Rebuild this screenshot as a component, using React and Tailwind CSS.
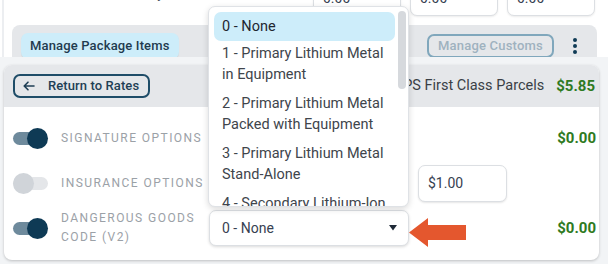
import React from "react";

function Toggle({ on }) {
  return (
    <div className="relative w-[36px] h-[21px] shrink-0">
      <div
        className={
          on
            ? "absolute left-0 top-[4px] w-[33px] h-[13px] rounded-full bg-[#6e8a9c]"
            : "absolute left-0 top-[4px] w-[35px] h-[13px] rounded-full bg-[#e4e6e9]"
        }
      />
      <div
        className={
          on
            ? "absolute top-0 left-[14px] w-[21px] h-[21px] rounded-full bg-[#0e3a55]"
            : "absolute top-0 left-0 w-[21px] h-[21px] rounded-full bg-[#d0d4d9]"
        }
      />
    </div>
  );
}

function Label({ children }) {
  return (
    <div className="w-[148px] shrink-0 text-[12px] leading-[19px] tracking-[0.12em] uppercase text-[#9ba1a7]">
      {children}
    </div>
  );
}

function Price({ children }) {
  return (
    <div className="flex-1 text-right pr-[3px] text-[15px] font-bold text-[#2e7a22]">{children}</div>
  );
}

const items = [
  ["1 - Primary Lithium Metal", "in Equipment"],
  ["2 - Primary Lithium Metal", "Packed with Equipment"],
  ["3 - Primary Lithium Metal", "Stand-Alone"],
  ["4 - Secondary Lithium-Ion", "Battery"],
];

export default function App() {
  return (
    <div className="relative w-[608px] h-[264px] overflow-hidden bg-white font-['Roboto',sans-serif] text-[#374151]">
      {/* top section */}
      <div className="h-[57px] overflow-hidden ml-[2px] border-l-2 border-[#eceef1] bg-white">
        <div className="flex items-center -mt-[20px] h-[36px] pr-[13px]">
          <div className="w-[160px] self-start mt-[3px] text-right text-[14px] leading-[20px] text-[#4b5563]">
            Quantity
          </div>
          <div className="flex-1" />
          <div className="flex gap-[9px]">
            <div className="w-[88px] h-[36px] rounded-[7px] border border-[#dcdfe3] bg-white px-[9px] flex items-center text-[14px] text-[#374151] shadow-[0_1px_2px_rgba(0,0,0,0.08)]">
              0.00
            </div>
            <div className="w-[88px] h-[36px] rounded-[7px] border border-[#dcdfe3] bg-white px-[9px] flex items-center text-[14px] text-[#374151] shadow-[0_1px_2px_rgba(0,0,0,0.08)]">
              0.00
            </div>
            <div className="w-[88px] h-[36px] rounded-[7px] border border-[#dcdfe3] bg-white px-[9px] flex items-center text-[14px] text-[#374151] shadow-[0_1px_2px_rgba(0,0,0,0.08)]">
              0.00
            </div>
          </div>
        </div>
        <div className="mt-[9px] ml-[8px] mr-[11px] h-[48px] rounded-t-[8px] bg-[#e5e7ea] flex items-start pt-[8px] pl-[9px] pr-[20px]">
          <div className="h-[26px] px-[9px] rounded-[7px] bg-[#cdedfa] flex items-center text-[13px] font-medium tracking-[0.15px] text-[#1f3b4f] shadow-[0_1px_1px_rgba(0,0,0,0.08)]">
            Manage Package Items
          </div>
          <div className="flex-1" />
          <div className="mt-[1px] h-[24px] px-[9px] rounded-[7px] border-2 border-[#80a7bc] flex items-center text-[13px] font-medium tracking-[0.2px] text-[#9fb2bf]">
            Manage Customs
          </div>
          <div className="ml-[19px] mt-[5px] flex flex-col gap-[2px]">
            <div className="w-[4px] h-[4px] rounded-full bg-[#0f3a55]" />
            <div className="w-[4px] h-[4px] rounded-full bg-[#0f3a55]" />
            <div className="w-[4px] h-[4px] rounded-full bg-[#0f3a55]" />
          </div>
        </div>
      </div>

      {/* lower section */}
      <div className="h-[207px] bg-[#f2f4f6] pt-[8px] pl-[4px] pr-[9px]">
        <div className="h-[195px] rounded-[8px] bg-white overflow-hidden shadow-[0_1px_3px_rgba(0,0,0,0.22)]">
          <div className="h-[42px] bg-[#e5e7ea] flex items-center pl-[9px] pr-[4px]">
            <div className="h-[24px] pl-[8px] pr-[9px] rounded-[7px] border-2 border-[#1f4d68] flex items-center gap-[13px] text-[13px] font-medium tracking-[0.1px] text-[#1f3f55]">
              <svg width="12" height="10" viewBox="0 0 12 10" fill="none" stroke="#1f3f55" strokeWidth="1.6" strokeLinecap="round" strokeLinejoin="round">
                <path d="M11 5H1.5M5 1.2L1.2 5L5 8.8" />
              </svg>
              <span>Return to Rates</span>
            </div>
            <div className="flex-1" />
            <div className="text-[14.5px] text-[#3a3f46]">USPS First Class Parcels</div>
            <div className="ml-[12px] text-[15px] font-bold text-[#2e7a22]">$5.85</div>
          </div>

          <div className="pt-[13px] pl-[9px] flex flex-col gap-[9px]">
            <div className="h-[36px] flex items-center">
              <Toggle on />
              <div className="w-[12px]" />
              <Label>Signature Options</Label>
              <div className="w-[200px] h-[36px] shrink-0" />
              <Price>$0.00</Price>
            </div>
            <div className="h-[36px] flex items-center">
              <Toggle on={false} />
              <div className="w-[12px]" />
              <Label>Insurance Options</Label>
              <div className="w-[200px] h-[36px] shrink-0" />
              <div className="ml-[9px] w-[89px] h-[37px] rounded-[7px] border border-[#dcdfe3] bg-white px-[9px] flex items-center text-[14px] text-[#374151] shadow-[0_1px_2px_rgba(0,0,0,0.1)]">
                $1.00
              </div>
              <div className="flex-1" />
            </div>
            <div className="h-[36px] flex items-center">
              <Toggle on />
              <div className="w-[12px]" />
              <Label>
                Dangerous Goods
                <br />
                Code (V2)
              </Label>
              <div className="w-[200px] h-[36px] shrink-0 rounded-[7px] border border-[#dcdfe3] bg-white pl-[12px] pr-[11px] flex items-center justify-between text-[14px] text-[#374151] shadow-[0_1px_3px_rgba(0,0,0,0.15)]">
                <span>0 - None</span>
                <svg width="8" height="6" viewBox="0 0 8 6">
                  <polygon points="0,0 8,0 4,5.5" fill="#1f2a37" />
                </svg>
              </div>
              <Price>$0.00</Price>
            </div>
          </div>
        </div>
      </div>

      {/* open dropdown menu */}
      <div className="absolute left-[208px] top-[6px] w-[201px] h-[201px] rounded-[7px] border border-[#dfe2e6] bg-white shadow-[0_2px_6px_rgba(0,0,0,0.15)] overflow-hidden flex">
        <div className="flex-1 pl-[5px] pr-[2px] pt-[5px] text-[14.5px] text-[#40454c]">
          <div className="h-[29px] rounded-[7px] bg-[#cdedfa] px-[8px] flex items-center text-[#1f2630]">0 - None</div>
          {items.map(([a, b]) => (
            <div key={a} className="px-[8px] pt-[2px] pb-[6px] leading-[21px]">
              <div className="whitespace-nowrap">{a}</div>
              <div className="whitespace-nowrap">{b}</div>
            </div>
          ))}
        </div>
        <div className="w-[11px] shrink-0 pt-[4px] pl-[1px]">
          <div className="w-[8px] h-[78px] rounded-[4px] bg-[#d6d9dd]" />
        </div>
      </div>

      {/* orange annotation arrow */}
      <svg className="absolute left-[409px] top-[217px]" width="58" height="31" viewBox="0 0 58 31">
        <polygon points="0,15.5 19,1 19,8 57,8 57,23 19,23 19,30" fill="#e4572e" />
      </svg>
    </div>
  );
}
